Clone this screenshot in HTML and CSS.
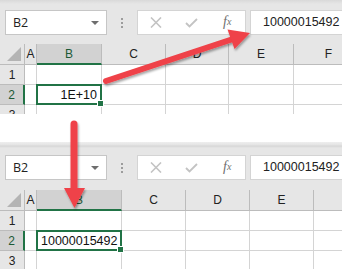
FILE: index.html
```html
<!DOCTYPE html>
<html>
  <head>
    <meta charset="UTF-8"/>
    <link rel="stylesheet" href="styles.css">
  </head>
  <body>
    <div class="page">
      <section class="panel panel-top">
        <div class="toolbar">
          <div class="namebox"><span>B2</span><span class="caret"></span></div>
          <div class="grip"><i></i><i></i><i></i></div>
          <div class="actions">
            <span class="slot">
              <svg width="12" height="11" viewBox="0 0 12 11"><path d="M1 0.5 L11 10.5 M11 0.5 L1 10.5" stroke="#c3c3c3" stroke-width="1.6" fill="none"/></svg>
            </span>
            <span class="slot">
              <svg width="13" height="10" viewBox="0 0 13 10"><path d="M1 5 L4.5 8.5 L12 1" stroke="#c3c3c3" stroke-width="1.8" fill="none"/></svg>
            </span>
            <span class="slot fx">f<sub>x</sub></span>
          </div>
          <div class="formula">10000015492</div>
        </div>
        <div class="sheet">
          <div class="corner"><span></span></div>
          <div class="col">A</div>
          <div class="col sel">B</div>
          <div class="col">C</div>
          <div class="col">D</div>
          <div class="col">E</div>
          <div class="col">F</div>

          <div class="row">1</div>
          <div class="cell"></div><div class="cell"></div><div class="cell"></div><div class="cell"></div><div class="cell"></div><div class="cell"></div>

          <div class="row sel">2</div>
          <div class="cell"></div>
          <div class="cell active num">1E+10</div>
          <div class="cell"></div><div class="cell"></div><div class="cell"></div><div class="cell"></div>

          <div class="row">3</div>
          <div class="cell"></div><div class="cell"></div><div class="cell"></div><div class="cell"></div><div class="cell"></div><div class="cell"></div>
        </div>
      </section>

      <section class="panel panel-bottom">
        <div class="toolbar">
          <div class="namebox"><span>B2</span><span class="caret"></span></div>
          <div class="grip"><i></i><i></i><i></i></div>
          <div class="actions">
            <span class="slot">
              <svg width="12" height="11" viewBox="0 0 12 11"><path d="M1 0.5 L11 10.5 M11 0.5 L1 10.5" stroke="#c3c3c3" stroke-width="1.6" fill="none"/></svg>
            </span>
            <span class="slot">
              <svg width="13" height="10" viewBox="0 0 13 10"><path d="M1 5 L4.5 8.5 L12 1" stroke="#c3c3c3" stroke-width="1.8" fill="none"/></svg>
            </span>
            <span class="slot fx">f<sub>x</sub></span>
          </div>
          <div class="formula">10000015492</div>
        </div>
        <div class="sheet wide">
          <div class="corner"><span></span></div>
          <div class="col">A</div>
          <div class="col sel">B</div>
          <div class="col">C</div>
          <div class="col">D</div>
          <div class="col">E</div>
          <div class="col"></div>

          <div class="row">1</div>
          <div class="cell"></div><div class="cell"></div><div class="cell"></div><div class="cell"></div><div class="cell"></div><div class="cell"></div>

          <div class="row sel">2</div>
          <div class="cell"></div>
          <div class="cell active left">10000015492</div>
          <div class="cell"></div><div class="cell"></div><div class="cell"></div><div class="cell"></div>

          <div class="row">3</div>
          <div class="cell"></div><div class="cell"></div><div class="cell"></div><div class="cell"></div><div class="cell"></div><div class="cell"></div>
        </div>
      </section>

      <svg class="arrows" width="342" height="269" viewBox="0 0 342 269">
        <defs>
          <filter id="shade" x="-20%" y="-20%" width="140%" height="140%">
            <feDropShadow dx="1" dy="2" stdDeviation="1.2" flood-color="#000" flood-opacity="0.35"/>
          </filter>
        </defs>
        <g filter="url(#shade)" fill="#ef4248" stroke="#ef4248">
          <line x1="106" y1="81" x2="233" y2="39" stroke-width="6" stroke-linecap="round"/>
          <polygon points="250,33 234.5,49 227.5,29.5" stroke="none"/>
          <line x1="74" y1="124" x2="74" y2="190" stroke-width="7" stroke-linecap="round"/>
          <polygon points="64,188 85,188 74.5,208" stroke="none"/>
        </g>
      </svg>
    </div>
  </body>
</html>
```

FILE: styles.css
```css
body
{
  margin: 0;
  padding: 0;
  background: #fff;
  font-family: "Liberation Sans", Arial, sans-serif;
}
.page
{
  position: relative;
  width: 342px;
  height: 269px;
  overflow: hidden;
}
.panel
{
  overflow: hidden;
}
.panel-top
{
  height: 114px;
}
.panel-bottom
{
  margin-top: 28px;
  height: 127px;
}
.toolbar
{
  display: flex;
  align-items: stretch;
  height: 25px;
  padding: 10px 0 9px 5px;
  background: linear-gradient(#d9d9d9, #e6e6e6 4px);
}
.panel-bottom .toolbar
{
  padding: 13px 0 10px 5px;
  background: linear-gradient(#eeeeee, #e4e4e4 3px, #d6d6d6 4px, #e6e6e6 6px);
}
.namebox
{
  box-sizing: border-box;
  width: 102px;
  background: #fff;
  border: 1px solid #c6c6c6;
  display: flex;
  align-items: center;
  justify-content: space-between;
  padding: 0 7px 0 7px;
  font-family: "Open Sans", sans-serif;
  font-size: 12.5px;
  color: #222;
}
.caret
{
  width: 0;
  height: 0;
  border-left: 4px solid transparent;
  border-right: 4px solid transparent;
  border-top: 4px solid #6e6e6e;
  margin-top: 1px;
}
.grip
{
  width: 30px;
  display: flex;
  flex-direction: column;
  align-items: center;
  justify-content: center;
  gap: 2px;
}
.grip i
{
  display: block;
  width: 2px;
  height: 2px;
  background: #9c9c9c;
}
.actions
{
  box-sizing: border-box;
  width: 109px;
  background: #fff;
  border: 1px solid #d4d4d4;
  display: flex;
}
.slot
{
  width: 36px;
  display: flex;
  align-items: center;
  justify-content: center;
}
.fx
{
  font-family: "Liberation Serif", serif;
  font-style: italic;
  font-size: 14px;
  color: #6f6f6f;
  padding-bottom: 2px;
}
.fx sub
{
  font-size: 10px;
  vertical-align: -1px;
}
.formula
{
  box-sizing: border-box;
  margin-left: 4px;
  flex: 1;
  background: #fff;
  border: 1px solid #d4d4d4;
  border-right: none;
  padding-left: 12px;
  font-size: 12.5px;
  line-height: 23px;
  color: #222;
  white-space: nowrap;
}
.sheet
{
  display: grid;
  grid-template-columns: 25px 12px 65px 64px 63px 65px 70px;
  grid-auto-rows: 20px;
  grid-template-rows: 21px;
  font-size: 12.5px;
  color: #111;
}
.sheet.wide
{
  grid-template-columns: 25px 12px 85px 64px 64px 64px 70px;
}
.corner,
.col,
.row
{
  box-sizing: border-box;
  background: #e6e6e6;
  border-right: 1px solid #bcbcbc;
  border-bottom: 1px solid #bcbcbc;
  display: flex;
  align-items: center;
  justify-content: center;
  font-size: 12px;
  color: #222;
}
.corner
{
  position: relative;
}
.corner span
{
  position: absolute;
  right: 3px;
  bottom: 3px;
  width: 0;
  height: 0;
  border-left: 14px solid transparent;
  border-bottom: 14px solid #b4b4b4;
}
.col.sel
{
  background: #d2d2d2;
  border-bottom: 2px solid #217346;
  color: #1c5a36;
}
.row.sel
{
  background: #d2d2d2;
  border-right: 2px solid #217346;
  color: #1c5a36;
}
.cell
{
  box-sizing: border-box;
  border-right: 1px solid #d4d4d4;
  border-bottom: 1px solid #d4d4d4;
  display: flex;
  align-items: center;
  padding: 0 4px;
  white-space: nowrap;
}
.cell.num
{
  justify-content: flex-end;
}
.cell.active
{
  position: relative;
}
.cell.active::after
{
  content: "";
  position: absolute;
  left: -1px;
  top: -1px;
  right: -1px;
  bottom: -1px;
  border: 2px solid #217346;
}
.cell.active::before
{
  content: "";
  position: absolute;
  right: -3px;
  bottom: -3px;
  width: 5px;
  height: 5px;
  background: #217346;
  border: 1px solid #fff;
  z-index: 1;
}
.arrows
{
  position: absolute;
  left: 0;
  top: 0;
}
```
